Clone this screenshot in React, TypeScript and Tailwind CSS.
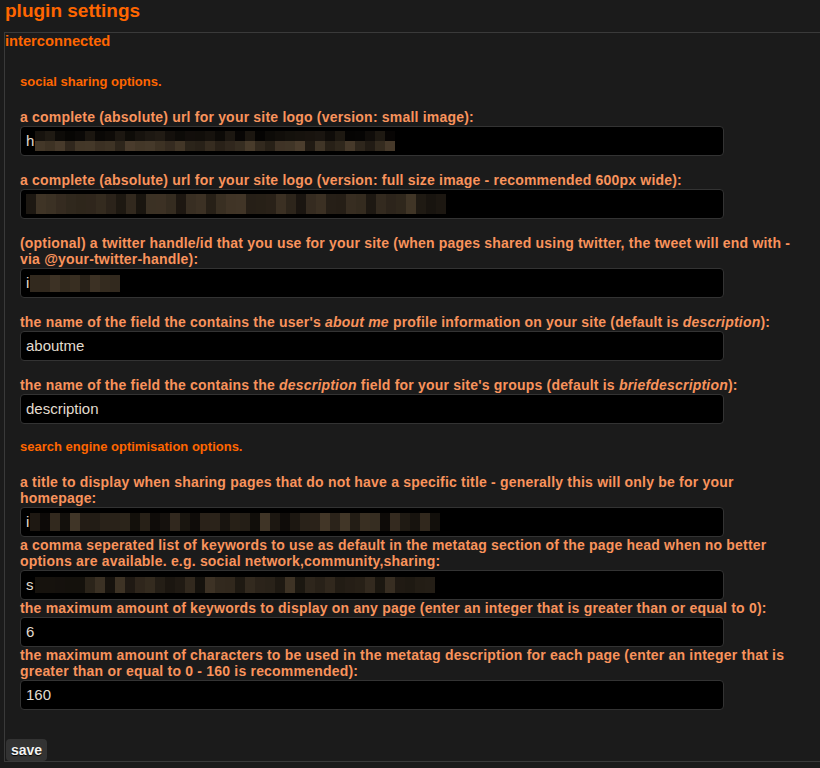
import React from "react";

function makeRand(seed: number) {
  let s = seed;
  return () => {
    s = (s * 9301 + 49297) % 233280;
    return s / 233280;
  };
}

// pixelated (blurred-out) text inside a field; one [lo, hi] brightness range per row
function Pix({
  cols,
  ranges,
  rowClass,
  seed,
}: {
  cols: number;
  ranges: [number, number][];
  rowClass: string;
  seed: number;
}) {
  const rnd = makeRand(seed);
  return (
    <div className="flex flex-col">
      {ranges.map(([lo, hi], r) => (
        <div key={r} className="flex">
          {Array.from({ length: cols }).map((_, c) => {
            const v = lo + rnd() * (hi - lo);
            const bg = `rgb(${Math.round(v)}, ${Math.round(v * 0.82)}, ${Math.round(v * 0.6)})`;
            return <div key={c} className={`w-[10px] ${rowClass}`} style={{ background: bg }} />;
          })}
        </div>
      ))}
    </div>
  );
}

function Box({ children }: { children?: React.ReactNode }) {
  return (
    <div className="flex h-[30px] w-[704px] items-center overflow-hidden rounded-[4px] border border-[#333] bg-black pl-[5px] text-[15px] text-[#e2dccf]">
      {children}
    </div>
  );
}

function Field({ label, children, gap }: { label: React.ReactNode; children?: React.ReactNode; gap?: boolean }) {
  return (
    <div className={gap ? "mb-[16px]" : ""}>
      <div className="mb-px w-[772px] text-[14px] font-bold leading-[16px] tracking-[0.2px] text-[#f9935c]">{label}</div>
      <Box>{children}</Box>
    </div>
  );
}

function Heading({ children }: { children: React.ReactNode }) {
  return <div className="mb-[20px] text-[13px] font-bold leading-[14px] text-[#ff6600]">{children}</div>;
}

export default function App() {
  return (
    <div className="min-h-screen bg-[#1b1b1b] pb-[6px] font-['Liberation_Sans',Arial,sans-serif]">
      <h1 className="px-[5px] text-[19px] font-bold leading-[22px] text-[#ff6600]">plugin settings</h1>

      <div className="ml-[4px] mt-[10px] border-b border-l border-t border-[#3a3a3a]">
        <div className="text-[14.7px] font-bold leading-[16px] text-[#ff6600]">interconnected</div>

        <div className="pl-[15px] pt-[26px]">
          <Heading>social sharing options.</Heading>

          <Field gap label="a complete (absolute) url for your site logo (version: small image):">
            <span className="mr-px">h</span>
            <Pix cols={36} ranges={[[4, 34], [30, 78]]} rowClass="h-[10px]" seed={11} />
          </Field>

          <Field gap label="a complete (absolute) url for your site logo (version: full size image - recommended 600px wide):">
            <Pix cols={42} ranges={[[24, 66]]} rowClass="h-[20px]" seed={23} />
          </Field>

          <Field
            gap
            label="(optional) a twitter handle/id that you use for your site (when pages shared using twitter, the tweet will end with - via @your-twitter-handle):"
          >
            <span className="mr-px">i</span>
            <Pix cols={9} ranges={[[25, 62]]} rowClass="h-[17px]" seed={37} />
          </Field>

          <Field
            gap
            label={
              <>
                the name of the field the contains the user's <i>about me</i> profile information on your site (default is{" "}
                <i>description</i>):
              </>
            }
          >
            aboutme
          </Field>

          <Field
            gap
            label={
              <>
                the name of the field the contains the <i>description</i> field for your site's groups (default is{" "}
                <i>briefdescription</i>):
              </>
            }
          >
            description
          </Field>

          <Heading>search engine optimisation options.</Heading>

          <Field label="a title to display when sharing pages that do not have a specific title - generally this will only be for your homepage:">
            <span className="mr-px">i</span>
            <Pix cols={41} ranges={[[12, 66]]} rowClass="h-[18px]" seed={53} />
          </Field>

          <Field label="a comma seperated list of keywords to use as default in the metatag section of the page head when no better options are available. e.g. social network,community,sharing:">
            <span className="mr-px">s</span>
            <Pix cols={40} ranges={[[20, 62]]} rowClass="h-[16px]" seed={71} />
          </Field>

          <Field label="the maximum amount of keywords to display on any page (enter an integer that is greater than or equal to 0):">
            6
          </Field>

          <Field label="the maximum amount of characters to be used in the metatag description for each page (enter an integer that is greater than or equal to 0 - 160 is recommended):">
            160
          </Field>
        </div>

        <button className="ml-px mt-[29px] block h-[22px] rounded-[4px] bg-[#333] px-[5px] text-[14px] font-bold leading-[22px] text-[#f2f2f2] [text-shadow:0_1px_1px_#000]">
          save
        </button>
      </div>
    </div>
  );
}
